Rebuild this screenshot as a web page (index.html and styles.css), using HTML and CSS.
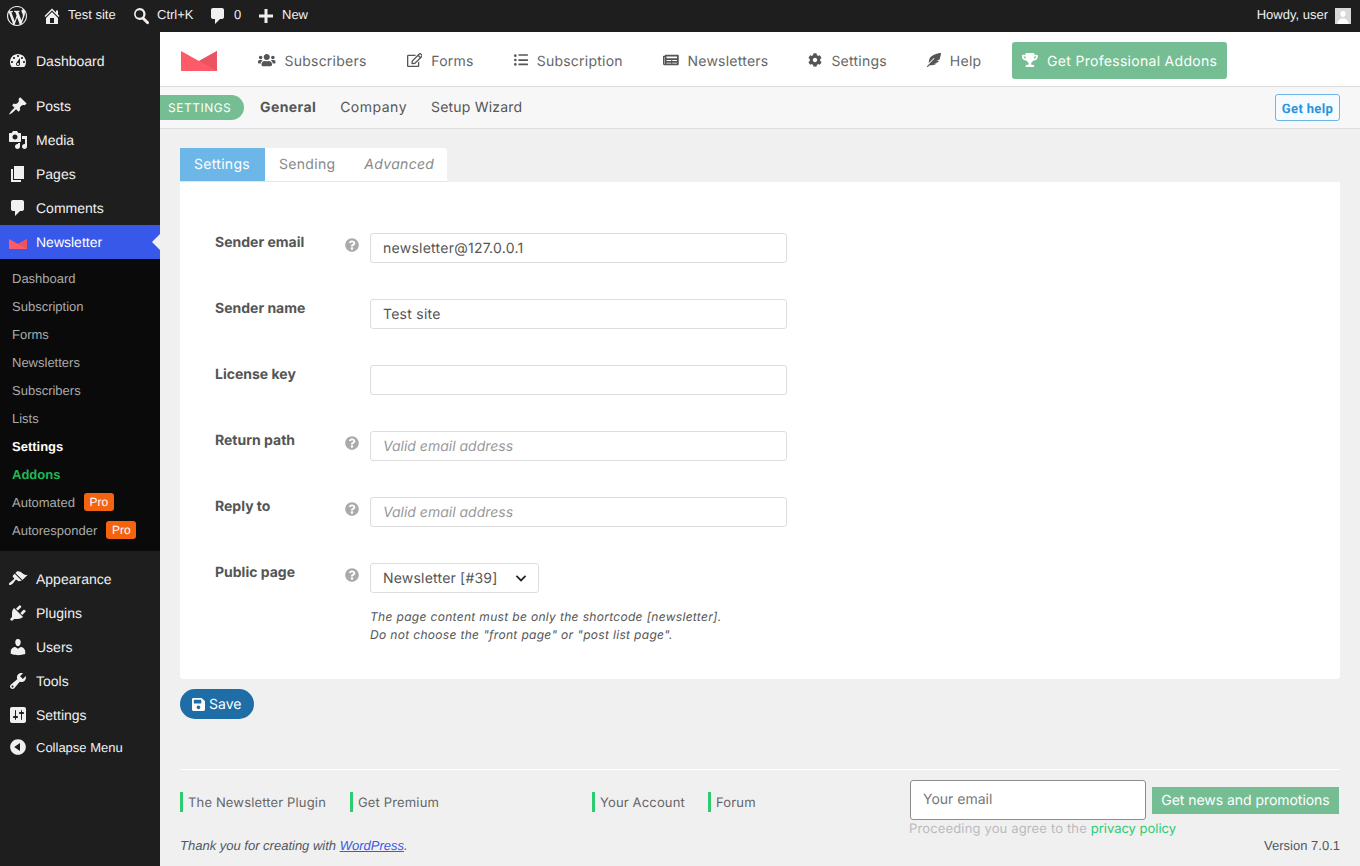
FILE: index.html
```html
<!DOCTYPE html>
<html lang="en">
<head>
<meta charset="utf-8">
<title>Settings</title>
<link rel="stylesheet" href="styles.css">
</head>
<body>
<svg class="defs" width="0" height="0" aria-hidden="true">
<symbol id="logo" viewBox="0 0 36 20"><path fill="#ff5a68" d="M0 0l18 10L36 0v20H0z"/><path fill="#ea5463" d="M18 10L36 0v20z"/></symbol>
<symbol id="fa-q" viewBox="0 0 512 512"><path d="M504 256c0 136.997-111.043 248-248 248S8 392.997 8 256C8 119.083 119.043 8 256 8s248 111.083 248 248zM262.655 90c-54.497 0-89.255 22.957-116.549 63.758-3.536 5.286-2.353 12.415 2.715 16.258l34.699 26.31c5.205 3.947 12.621 3.008 16.665-2.122 17.864-22.658 30.113-35.797 57.303-35.797 20.429 0 45.698 13.148 45.698 32.958 0 14.976-12.363 22.667-32.534 33.976C247.128 238.528 216 254.941 216 296v4c0 6.627 5.373 12 12 12h56c6.627 0 12-5.373 12-12v-1.333c0-28.462 83.186-29.647 83.186-106.667 0-58.002-60.165-102-116.531-102zM256 338c-25.365 0-46 20.635-46 46 0 25.364 20.635 46 46 46s46-20.636 46-46c0-25.365-20.635-46-46-46z"/></symbol>
</svg>

<header class="adminbar">
  <div class="ab-left">
    <a class="ab-item ab-wp"><svg class="ab-ico-wp" viewBox="0 0 20 20"><path d="M20 10c0-5.51-4.49-10-10-10C4.48 0 0 4.49 0 10c0 5.52 4.48 10 10 10 5.51 0 10-4.48 10-10zM7.78 15.37L4.37 6.22c.55-.02 1.17-.08 1.17-.08.5-.06.44-1.13-.06-1.11 0 0-1.45.11-2.37.11-.18 0-.37 0-.58-.01C4.12 2.69 6.87 1.11 10 1.11c2.33 0 4.45.87 6.05 2.34-.68-.11-1.65.39-1.65 1.58 0 .74.45 1.36.9 2.1.35.61.55 1.36.55 2.46 0 1.49-1.4 5-1.4 5l-3.03-8.37c.54-.02.82-.17.82-.17.5-.05.44-1.25-.06-1.22 0 0-1.44.12-2.38.12-.87 0-2.33-.12-2.33-.12-.5-.03-.56 1.2-.06 1.22l.92.08 1.26 3.41zM17.41 10c.24-.64.74-1.87.43-4.25.7 1.29 1.05 2.71 1.05 4.25 0 3.29-1.73 6.24-4.4 7.78.97-2.59 1.94-5.2 2.92-7.78zM6.1 18.09C3.12 16.65 1.11 13.53 1.11 10c0-1.3.23-2.48.72-3.59C3.25 10.3 4.67 14.2 6.1 18.09zm4.03-6.63l2.58 6.98c-.86.29-1.76.45-2.71.45-.79 0-1.57-.11-2.29-.33.81-2.38 1.62-4.74 2.42-7.1z"/></svg></a>
    <a class="ab-item"><svg class="ab-ico" viewBox="0 0 20 20"><path d="M16 8.5l1.53 1.53-1.06 1.06L10 4.62l-6.47 6.47-1.06-1.06L10 2.5l4 4v-2h2v4zm-6-2.46l6 5.99V18H4v-5.97zM12 17v-5H8v5h4z"/></svg><span>Test site</span></a>
    <a class="ab-item ab-search"><svg class="ab-ico" viewBox="0 0 20 20"><path d="M8.5 2a6 6 0 0 1 4.9 9.45l4.3 4.3a1.5 1.5 0 0 1-2.1 2.1l-4.3-4.3A6 6 0 1 1 8.5 2zm0 2.2a3.8 3.8 0 1 0 0 7.6 3.8 3.8 0 0 0 0-7.6z"/></svg><span>Ctrl+K</span></a>
    <a class="ab-item"><svg class="ab-ico" viewBox="0 0 20 20"><path d="M5 2h9c1.1 0 2 .9 2 2v7c0 1.1-.9 2-2 2h-2l-5 5v-5H5c-1.1 0-2-.9-2-2V4c0-1.1.9-2 2-2z"/></svg><span>0</span></a>
    <a class="ab-item"><svg class="ab-ico" viewBox="0 0 20 20"><path d="M17 8.5v3h-5.5V17h-3v-5.500H3v-3h5.500V3h3v5.500z"/></svg><span>New</span></a>
  </div>
  <div class="ab-right">
    <span>Howdy, user</span>
    <span class="avatar"><svg viewBox="0 0 16 16"><path d="M8 3a2.600 2.600 0 0 1 2.600 2.800c0 1.700-1.100 3.200-2.600 3.200S5.400 7.500 5.400 5.800A2.600 2.600 0 0 1 8 3zM2.500 16c0-3.500 2.500-5.500 5.500-5.500s5.500 2 5.500 5.500z"/></svg></span>
  </div>
</header>

<div class="shell">
<nav class="sidebar">
  <ul class="menu menu-first">
    <li class="mi"><svg viewBox="0 0 20 20"><path d="M3.760 16h12.480c1.100-1.370 1.760-3.110 1.760-5 0-4.420-3.580-8-8-8s-8 3.580-8 8c0 1.890.66 3.630 1.760 5zM10 4c.55 0 1 .45 1 1s-.45 1-1 1-1-.45-1-1 .45-1 1-1zM6 6c.55 0 1 .45 1 1s-.45 1-1 1-1-.45-1-1 .45-1 1-1zm8 0c.55 0 1 .45 1 1s-.45 1-1 1-1-.45-1-1 .45-1 1-1zm-5.370 5.550L12 7v6c0 1.100-.9 2-2 2s-2-.9-2-2c0-.57.24-1.080.63-1.450zM4 10c.55 0 1 .45 1 1s-.45 1-1 1-1-.45-1-1 .45-1 1-1zm12 0c.55 0 1 .45 1 1s-.45 1-1 1-1-.45-1-1 .45-1 1-1zm-5 3c0-.55-.45-1-1-1s-1 .45-1 1 .45 1 1 1 1-.45 1-1z"/></svg><span>Dashboard</span></li>
  </ul>
  <ul class="menu menu-second">
    <li class="mi"><svg viewBox="0 0 20 20"><path d="M10.440 3.020l1.820-1.820 6.360 6.350-1.830 1.820c-1.050-.68-2.480-.57-3.410.36l-.75.75c-.92.93-1.040 2.350-.35 3.410l-1.830 1.820-2.410-2.410-2.800 2.790c-.42.42-3.380 2.710-3.800 2.290s1.860-3.390 2.280-3.810l2.790-2.790L4.100 9.360l1.830-1.820c1.050.69 2.480.57 3.400-.36l.75-.75c.93-.92 1.050-2.350.36-3.410z"/></svg><span>Posts</span></li>
    <li class="mi"><svg viewBox="0 0 20 20"><path d="M13 11V4c0-.55-.45-1-1-1h-1.670L9 1H5L3.670 3H2c-.55 0-1 .45-1 1v7c0 .55.45 1 1 1h10c.55 0 1-.45 1-1zM7 4.500c1.380 0 2.500 1.120 2.500 2.500S8.380 9.500 7 9.500 4.500 8.380 4.500 7 5.620 4.500 7 4.500zM14 6h5v10.500c0 1.380-1.120 2.500-2.500 2.500S14 17.880 14 16.500s1.120-2.500 2.500-2.500c.17 0 .34.02.5.05V9h-3V6zm-4 8.050V13h2v3.500c0 1.380-1.120 2.500-2.500 2.500S7 17.880 7 16.500 8.120 14 9.500 14c.17 0 .34.02.5.05z"/></svg><span>Media</span></li>
    <li class="mi"><svg viewBox="0 0 20 20"><path d="M6 15V2h10v13H6zm-1 1h8v2H3V5h2v11z"/></svg><span>Pages</span></li>
    <li class="mi"><svg viewBox="0 0 20 20"><path d="M5 2h9c1.100 0 2 .9 2 2v7c0 1.100-.9 2-2 2h-2l-5 5v-5H5c-1.100 0-2-.9-2-2V4c0-1.100.9-2 2-2z"/></svg><span>Comments</span></li>
    <li class="mi mi-active"><svg class="mi-logo"><use href="#logo"/></svg><span>Newsletter</span></li>
  </ul>
  <ul class="submenu">
    <li>Dashboard</li>
    <li>Subscription</li>
    <li>Forms</li>
    <li>Newsletters</li>
    <li>Subscribers</li>
    <li>Lists</li>
    <li class="sub-current">Settings</li>
    <li class="sub-addons">Addons</li>
    <li>Automated <b class="pro">Pro</b></li>
    <li>Autoresponder <b class="pro">Pro</b></li>
  </ul>
  <ul class="menu menu-third">
    <li class="mi"><svg viewBox="0 0 20 20"><path d="M14.480 11.060L7.410 3.990l1.500-1.500c.5-.56 2.300-.47 3.510.32 1.210.8 1.430 1.280 2.910 2.100 1.180.64 2.450 1.260 4.450.85zm-.71.71L6.700 4.700 4.930 6.470c-.39.39-.39 1.020 0 1.410l1.060 1.060c.39.39.39 1.030 0 1.420-.6.6-1.430 1.110-2.210 1.690-.35.26-.7.53-1.010.84C1.430 13.230.4 14.960 1.190 15.750c.79.79 2.520-.24 3.860-1.580.31-.31.58-.66.84-1.010.58-.78 1.090-1.610 1.690-2.210.39-.39 1.030-.39 1.420 0l1.060 1.060c.39.39 1.020.39 1.410 0z"/></svg><span>Appearance</span></li>
    <li class="mi"><svg viewBox="0 0 20 20"><path d="M13.110 4.360L9.870 7.600 8 5.730l3.240-3.240c.35-.34 1.050-.2 1.560.32.52.51.66 1.210.31 1.550zm-8 1.770l.91-1.120 9.010 9.010-1.190.84c-.71.71-2.630 1.160-3.820 1.160H6.140L4.900 17.260c-.59.59-1.540.59-2.120 0-.59-.58-.59-1.530 0-2.120l1.240-1.240v-3.880c0-1.130.4-3.190 1.090-3.890zm7.260 3.970l3.240-3.240c.34-.35 1.040-.21 1.550.31.52.51.66 1.210.31 1.550l-3.240 3.250z"/></svg><span>Plugins</span></li>
    <li class="mi"><svg viewBox="0 0 20 20"><path d="M10 9.250c-2.270 0-2.730-3.440-2.730-3.440C7 4.020 7.820 2 9.970 2c2.160 0 2.980 2.020 2.710 3.810 0 0-.41 3.440-2.680 3.440zm0 2.570L12.720 10c2.390 0 4.520 2.330 4.520 4.530v2.490s-3.650 1.130-7.240 1.130c-3.650 0-7.240-1.130-7.240-1.130v-2.490c0-2.250 1.940-4.480 4.470-4.480z"/></svg><span>Users</span></li>
    <li class="mi"><svg viewBox="0 0 20 20"><path d="M16.680 9.770c-1.340 1.340-3.300 1.670-4.950.99l-5.410 6.520c-.99.99-2.590.99-3.580 0s-.99-2.590 0-3.570l6.520-5.420c-.68-1.650-.35-3.610.99-4.950 1.280-1.280 3.120-1.620 4.720-1.060l-2.890 2.890 2.820 2.820 2.860-2.870c.53 1.580.18 3.390-1.080 4.650zM3.810 16.210c.4.39 1.040.39 1.430 0 .4-.4.4-1.040 0-1.430-.39-.4-1.030-.4-1.430 0-.39.39-.39 1.030 0 1.430z"/></svg><span>Tools</span></li>
    <li class="mi"><svg viewBox="0 0 20 20"><path d="M18 16V4c0-1.100-.9-2-2-2H4c-1.100 0-2 .9-2 2v12c0 1.100.9 2 2 2h12c1.100 0 2-.9 2-2zM8 11h1c.55 0 1 .45 1 1s-.45 1-1 1H8v1.500c0 .28-.22.5-.5.5s-.5-.22-.5-.5V13H6c-.55 0-1-.45-1-1s.45-1 1-1h1V5.500c0-.28.22-.5.5-.5s.5.22.5.5V11zm5-2h-1c-.55 0-1-.45-1-1s.45-1 1-1h1V5.500c0-.28.22-.5.5-.5s.5.22.5.5V7h1c.55 0 1 .45 1 1s-.45 1-1 1h-1v5.500c0 .28-.22.5-.5.5s-.5-.22-.5-.5V9z"/></svg><span>Settings</span></li>
    <li class="mi mi-collapse"><svg viewBox="0 0 20 20"><path d="M10 2.160c4.330 0 7.840 3.510 7.840 7.840s-3.510 7.840-7.840 7.840S2.160 14.330 2.160 10 5.710 2.160 10 2.160zm2 11.720V6.120L6.180 9.970z"/></svg><span>Collapse Menu</span></li>
  </ul>
</nav>

<main class="main">
  <div class="topnav">
    <svg class="tn-logo"><use href="#logo"/></svg>
    <a class="tn-item"><svg class="tn-ico tn-w640" viewBox="0 0 640 512"><path d="M96 224c35.300 0 64-28.700 64-64s-28.700-64-64-64-64 28.700-64 64 28.700 64 64 64zm448 0c35.300 0 64-28.700 64-64s-28.700-64-64-64-64 28.700-64 64 28.700 64 64 64zm32 32h-64c-17.600 0-33.500 7.100-45.100 18.600 40.300 22.100 68.900 62 75.100 109.400h66c17.700 0 32-14.300 32-32v-32c0-35.300-28.700-64-64-64zm-256 0c61.900 0 112-50.100 112-112S381.900 32 320 32 208 82.100 208 144s50.100 112 112 112zm76.800 32h-8.300c-20.800 10-43.900 16-68.500 16s-47.600-6-68.500-16h-8.300C179.600 288 128 339.600 128 403.200V432c0 26.500 21.500 48 48 48h288c26.500 0 48-21.500 48-48v-28.800c0-63.600-51.600-115.200-115.200-115.200zm-223.700-13.400C161.500 263.100 145.600 256 128 256H64c-35.300 0-64 28.700-64 64v32c0 17.700 14.300 32 32 32h65.900c6.300-47.400 34.900-87.300 75.200-109.400z"/></svg>Subscribers</a>
    <a class="tn-item"><svg class="tn-ico tn-w576" viewBox="0 0 576 512"><path d="M402.300 344.900l32-32c5-5 13.700-1.500 13.700 5.700V464c0 26.500-21.500 48-48 48H48c-26.500 0-48-21.500-48-48V112c0-26.500 21.500-48 48-48h273.500c7.100 0 10.700 8.600 5.700 13.700l-32 32c-1.500 1.500-3.500 2.300-5.700 2.300H48v352h352V350.500c0-2.100.8-4.100 2.300-5.600zm156.600-201.800L296.300 405.700l-90.400 10c-26.200 2.900-48.500-19.200-45.600-45.600l10-90.400L432.900 17.100c22.900-22.900 59.900-22.900 82.700 0l43.200 43.200c22.900 22.900 22.900 60 .1 82.800zM460.100 174L402 115.900 216.200 301.800l-7.300 65.300 65.300-7.300L460.100 174zm64.800-79.700l-43.200-43.200c-4.100-4.100-10.800-4.100-14.800 0L436 82l58.100 58.100 30.900-30.900c4-4.200 4-10.800-.1-14.900z"/></svg>Forms</a>
    <a class="tn-item"><svg class="tn-ico tn-w512" viewBox="0 0 512 512"><path d="M48 48a48 48 0 1 0 0 96 48 48 0 0 0 0-96zm0 160a48 48 0 1 0 0 96 48 48 0 0 0 0-96zm0 160a48 48 0 1 0 0 96 48 48 0 0 0 0-96zm128-272h320a16 16 0 0 0 16-16V64a16 16 0 0 0-16-16H176a16 16 0 0 0-16 16v16a16 16 0 0 0 16 16zm320 128H176a16 16 0 0 0-16 16v32a16 16 0 0 0 16 16h320a16 16 0 0 0 16-16v-32a16 16 0 0 0-16-16zm0 160H176a16 16 0 0 0-16 16v32a16 16 0 0 0 16 16h320a16 16 0 0 0 16-16v-32a16 16 0 0 0-16-16z"/></svg>Subscription</a>
    <a class="tn-item"><svg class="tn-ico tn-w576" viewBox="0 0 576 512"><path d="M552 64H88c-13.255 0-24 10.745-24 24v8H24c-13.255 0-24 10.745-24 24v272c0 30.928 25.072 56 56 56h472c26.510 0 48-21.490 48-48V88c0-13.255-10.745-24-24-24zM56 400a8 8 0 0 1-8-8V144h16v248a8 8 0 0 1-8 8zm236-16H140c-6.627 0-12-5.373-12-12v-8c0-6.627 5.373-12 12-12h152c6.627 0 12 5.373 12 12v8c0 6.627-5.373 12-12 12zm208 0H348c-6.627 0-12-5.373-12-12v-8c0-6.627 5.373-12 12-12h152c6.627 0 12 5.373 12 12v8c0 6.627-5.373 12-12 12zm-208-96H140c-6.627 0-12-5.373-12-12v-8c0-6.627 5.373-12 12-12h152c6.627 0 12 5.373 12 12v8c0 6.627-5.373 12-12 12zm208 0H348c-6.627 0-12-5.373-12-12v-8c0-6.627 5.373-12 12-12h152c6.627 0 12 5.373 12 12v8c0 6.627-5.373 12-12 12zm0-96H140c-6.627 0-12-5.373-12-12v-40c0-6.627 5.373-12 12-12h360c6.627 0 12 5.373 12 12v40c0 6.627-5.373 12-12 12z"/></svg>Newsletters</a>
    <a class="tn-item"><svg class="tn-ico tn-w512" viewBox="0 0 512 512"><path d="M487.400 315.700l-42.600-24.600c4.300-23.200 4.300-47 0-70.200l42.600-24.600c4.900-2.800 7.100-8.600 5.500-14-11.100-35.600-30-67.800-54.700-94.600-3.800-4.100-10-5.100-14.800-2.300L380.800 110c-17.900-15.400-38.500-27.300-60.800-35.100V25.800c0-5.600-3.900-10.500-9.400-11.700-36.700-8.200-74.300-7.800-109.200 0-5.500 1.200-9.400 6.100-9.400 11.700V75c-22.200 7.900-42.800 19.800-60.800 35.100L88.700 85.500c-4.900-2.800-11-1.900-14.800 2.300-24.700 26.700-43.600 58.900-54.700 94.600-1.700 5.400.6 11.200 5.500 14L67.300 221c-4.300 23.200-4.300 47 0 70.200l-42.600 24.600c-4.900 2.800-7.100 8.600-5.500 14 11.100 35.600 30 67.800 54.700 94.600 3.800 4.100 10 5.100 14.800 2.300l42.600-24.600c17.900 15.400 38.500 27.300 60.800 35.100v49.200c0 5.600 3.900 10.500 9.400 11.700 36.700 8.200 74.300 7.800 109.200 0 5.500-1.200 9.400-6.100 9.400-11.700v-49.200c22.200-7.900 42.800-19.800 60.800-35.100l42.600 24.600c4.900 2.800 11 1.900 14.800-2.300 24.700-26.700 43.600-58.900 54.700-94.600 1.500-5.500-.7-11.300-5.600-14.100zM256 336c-44.100 0-80-35.900-80-80s35.900-80 80-80 80 35.900 80 80-35.900 80-80 80z"/></svg>Settings</a>
    <a class="tn-item"><svg class="tn-ico tn-w512" viewBox="0 0 512 512"><path d="M512 0C460.220 3.560 96.440 38.200 71.010 287.610c-3.090 26.660-4.840 53.440-5.990 80.240l178.870-178.690c6.250-6.250 16.400-6.250 22.650 0s6.250 16.380 0 22.630L7.040 471.030c-9.380 9.370-9.380 24.570 0 33.940 9.370 9.370 24.570 9.370 33.940 0l57.130-57.070c42.090-.14 84.150-2.530 125.960-7.360 53.480-5.440 97.020-26.470 132.580-56.540H255.740l146.790-48.880c11.250-14.890 21.370-30.710 30.450-47.120h-81.140l106.540-53.210C500.290 132.860 510.190 26.260 512 0z"/></svg>Help</a>
    <a class="tn-pro"><svg class="tn-ico tn-w576" viewBox="0 0 576 512"><path d="M552 64H448V24c0-13.300-10.700-24-24-24H152c-13.300 0-24 10.700-24 24v40H24C10.700 64 0 74.700 0 88v56c0 35.700 22.500 72.400 61.900 100.700 31.500 22.700 69.800 37.100 110 41.700C203.300 338.500 240 360 240 360v72h-48c-35.300 0-64 20.700-64 56v12c0 6.600 5.400 12 12 12h296c6.600 0 12-5.400 12-12v-12c0-35.300-28.700-56-64-56h-48v-72s36.700-21.500 68.100-73.600c40.300-4.600 78.700-19 110-41.700 39.300-28.300 61.900-65 61.900-100.700V88c0-13.300-10.700-24-24-24zM99.300 192.800C74.900 175.200 64 155.600 64 144v-16h64.200c1 32.600 5.800 61.200 12.800 86.200-15.100-5.200-29.200-12.400-41.700-21.400zM512 144c0 16.100-17.700 36.100-35.300 48.800-12.500 9-26.700 16.200-41.800 21.400 7-25 11.800-53.600 12.800-86.200H512v16z"/></svg>Get Professional Addons</a>
  </div>

  <div class="subnav">
    <span class="pill">SETTINGS</span>
    <a class="sn-link sn-current">General</a>
    <a class="sn-link sn-company">Company</a>
    <a class="sn-link">Setup Wizard</a>
    <a class="gethelp">Get help</a>
  </div>

  <div class="content">
    <div class="tabs">
      <a class="tab tab-active">Settings</a>
      <a class="tab tab-send">Sending</a>
      <a class="tab tab-adv">Advanced</a>
    </div>
    <form class="panel">
      <div class="row">
        <label class="lab">Sender email</label>
        <span class="hint"><svg><use href="#fa-q"/></svg></span>
        <input class="field" type="text" value="newsletter@127.0.0.1">
      </div>
      <div class="row">
        <label class="lab">Sender name</label>
        <span class="hint"></span>
        <input class="field" type="text" value="Test site">
      </div>
      <div class="row">
        <label class="lab">License key</label>
        <span class="hint"></span>
        <input class="field" type="text">
      </div>
      <div class="row">
        <label class="lab">Return path</label>
        <span class="hint"><svg><use href="#fa-q"/></svg></span>
        <input class="field" type="text" placeholder="Valid email address">
      </div>
      <div class="row">
        <label class="lab">Reply to</label>
        <span class="hint"><svg><use href="#fa-q"/></svg></span>
        <input class="field" type="text" placeholder="Valid email address">
      </div>
      <div class="row row-last">
        <label class="lab">Public page</label>
        <span class="hint"><svg><use href="#fa-q"/></svg></span>
        <div class="pick">
          <div class="select"><span>Newsletter [#39]</span><svg viewBox="0 0 20 20"><path d="M3.500 7l6.500 6.500L16.500 7"/></svg></div>
          <p class="desc">The page content must be only the shortcode [newsletter].<br>Do not choose the "front page" or "post list page".</p>
        </div>
      </div>
    </form>
    <button class="save" type="button"><svg viewBox="0 0 448 512"><path d="M433.941 129.941l-83.882-83.882A48 48 0 0 0 316.118 32H48C21.490 32 0 53.490 0 80v352c0 26.510 21.490 48 48 48h352c26.510 0 48-21.490 48-48V163.882a48 48 0 0 0-14.059-33.941zM224 416c-35.346 0-64-28.654-64-64 0-35.346 28.654-64 64-64s64 28.654 64 64c0 35.346-28.654 64-64 64zm96-304.520V212c0 6.627-5.373 12-12 12H76c-6.627 0-12-5.373-12-12V108c0-6.627 5.373-12 12-12h228.520c3.183 0 6.235 1.264 8.485 3.515l3.480 3.480A11.996 11.996 0 0 1 320 111.480z"/></svg>Save</button>

    <footer class="foot">
      <div class="foot-links">
        <a class="fl">The Newsletter Plugin</a>
        <a class="fl">Get Premium</a>
        <a class="fl">Your Account</a>
        <a class="fl">Forum</a>
      </div>
      <div class="foot-sub">
        <div class="foot-form">
          <input class="foot-input" type="text" placeholder="Your email">
          <a class="foot-btn">Get news and promotions</a>
        </div>
        <p class="foot-note">Proceeding you agree to the <a>privacy policy</a></p>
      </div>
    </footer>
    <div class="wpfoot">
      <em>Thank you for creating with <a>WordPress</a>.</em>
      <span>Version 7.0.1</span>
    </div>
  </div>
</main>
</div>
</body>
</html>
```
FILE: styles.css
```css
* { box-sizing: border-box; }
html, body { margin: 0; padding: 0; height: 866px; overflow: hidden; }
body { background: #f0f0f1; font-family: "Liberation Sans", Arial, sans-serif; font-size: 13px; color: #3c434a; text-rendering: geometricPrecision; }
ul { list-style: none; margin: 0; padding: 0; }
p { margin: 0; }
.defs { position: absolute; }
input { text-rendering: geometricPrecision; }

.adminbar { height: 32px; background: #1e1e1e; color: #f0f0f1; display: flex; justify-content: space-between; align-items: center; font-size: 13px; }
.ab-left { display: flex; align-items: center; height: 100%; padding-left: 7px; }
.ab-item { display: flex; align-items: center; height: 100%; }
.ab-item span { margin-top: -3px; }
.ab-item svg { fill: #f0f0f1; }
.ab-wp { width: 35px; }
.ab-ico-wp { width: 20px; height: 20px; }
.ab-ico { width: 20px; height: 20px; margin-right: 6px; }
.ab-item:nth-child(2) { width: 89px; }
.ab-item:nth-child(3) { width: 77px; }
.ab-item:nth-child(4) { width: 48px; }
.ab-right { display: flex; align-items: center; gap: 7px; padding-right: 9px; }
.ab-right > span:first-child { margin-top: -3px; }
.avatar { width: 16px; height: 16px; background: #d8d8d8; display: block; }
.avatar svg { display: block; width: 16px; height: 16px; fill: #fff; }

.shell { display: flex; height: 834px; }
.sidebar { width: 160px; flex: none; background: #1e1e1e; color: #f0f0f1; font-size: 14px; }
.menu-first { padding-top: 12px; }
.menu-second { padding-top: 11px; }
.menu-third { padding-top: 11px; }
.mi { height: 34px; display: flex; align-items: center; position: relative; padding-left: 8px; }
.mi svg { width: 20px; height: 20px; fill: #f0f0f1; margin-right: 8px; flex: none; }
.mi-active { background: #3858e9; color: #fff; }
.mi-active::after { content: ""; position: absolute; right: 0; top: 50%; margin-top: -8px; border: 8px solid transparent; border-right-color: #f0f0f1; border-left-width: 0; }
.mi .mi-logo { width: 18px; height: 10px; margin: 3px 9px 0 1px; }
.mi-collapse { font-size: 13px; height: 32px; margin-top: -1px; }
.submenu { background: #0a0a0a; padding: 5px 0 7px; font-size: 13px; color: #aaa; }
.submenu li { height: 28px; display: flex; align-items: center; padding-left: 12px; }
.sub-current { color: #fff; font-weight: 700; }
.sub-addons { color: #1db954; font-weight: 700; }
.pro { background: #f4640f; color: #fff; font-weight: 400; font-size: 12px; border-radius: 3px; width: 30px; height: 18px; line-height: 18px; text-align: center; margin-left: 9px; }

.main { flex: 1; min-width: 0; display: flex; flex-direction: column; font-family: Inter, "Liberation Sans", sans-serif; }
.topnav { height: 55px; background: #fff; border-bottom: 1px solid #ddd; display: flex; align-items: center; padding: 2px 0 0 21px; font-size: 14px; color: #666; }
.tn-logo { width: 36px; height: 20px; margin: 1px 21px 0 0; flex: none; }
.tn-item { display: flex; align-items: center; padding: 2px 20px 0; color: #666; letter-spacing: .23px; }
.tn-ico { height: 14px; fill: #555; margin: -2px 9px 0 0; flex: none; }
.tn-w640 { width: 17.5px; }
.tn-w576 { width: 15.750px; }
.tn-w512 { width: 14px; }
.tn-pro { margin: 1px 0 0 11px; height: 37px; width: 215px; background: #75bd92; color: #fff; border-radius: 3px; display: flex; align-items: center; padding: 1px 0 0 10px; letter-spacing: .3px; }
.tn-pro .tn-ico { fill: #fff; }

.subnav { height: 42px; background: #f7f7f7; border-bottom: 1px solid #ddd; display: flex; align-items: center; padding-right: 20px; font-size: 14px; color: #555; }
.pill { background: #75bd92; color: #fff; font-size: 12px; height: 25px; line-height: 25px; width: 84px; padding-left: 8px; border-radius: 0 13px 13px 0; letter-spacing: .5px; margin-right: 16px; font-weight: 400; }
.sn-link { margin: 0 24px 0 0; letter-spacing: .2px; }
.sn-current { font-weight: 700; letter-spacing: .4px; }
.sn-company { letter-spacing: .5px; }
.gethelp { margin-left: auto; margin-right: 0; width: 65px; height: 27px; border: 1px solid #6db6e8; border-radius: 3px; background: #f5fbff; color: #2a93dc; font-family: Roboto, sans-serif; font-weight: 700; font-size: 13px; letter-spacing: .35px; display: flex; align-items: center; justify-content: center; padding-top: 3px; }

.content { flex: 1; padding: 19px 20px 0; }
.tabs { display: flex; width: max-content; background: #fff; border-radius: 3px 3px 0 0; height: 34px; border-bottom: 1px solid #e5e5e5; font-size: 14px; color: #888; letter-spacing: .3px; }
.tab { height: 33px; padding: 0 14px; display: flex; align-items: center; }
.tab-active { background: #6db6e8; color: #fff; padding-right: 15px; }
.tab-send { padding-right: 15px; }
.tab-adv { font-style: italic; padding-right: 13px; }
.panel { background: #fff; border-radius: 0 0 3px 3px; height: 497px; padding: 51px 35px 0; }
.row { display: flex; align-items: flex-start; height: 66px; }
.lab { width: 130px; font-weight: 700; color: #555; font-size: 14px; line-height: 18px; flex: none; padding-top: 1px; }
.hint { width: 25px; flex: none; height: 16px; margin-top: 5px; }
.hint svg { display: block; width: 14px; height: 14px; fill: #aaa; }
.field { width: 417px; height: 30px; border: 1px solid #ddd; border-radius: 3px; padding: 0 12px; font-family: inherit; font-size: 14px; color: #555; background: #fff; outline: none; margin: 0; letter-spacing: .25px; }
.field::placeholder { color: #999; font-style: italic; opacity: 1; letter-spacing: 0; }
.select { width: 169px; height: 30px; border: 1px solid #ddd; border-radius: 3px; display: flex; align-items: center; justify-content: space-between; padding: 0 10px 0 12px; font-size: 14px; color: #555; background: #fff; letter-spacing: .2px; }
.select svg { width: 14px; height: 14px; fill: none; stroke: #222; stroke-width: 2.400; }
.desc { font-size: 12px; font-style: italic; line-height: 18px; color: #555; margin-top: 15px; letter-spacing: .3px; word-spacing: .15px; }

.save { display: flex; align-items: center; margin: 10px 0 0; height: 30px; width: 74px; padding: 0 0 0 12px; border: 0; border-radius: 15px; background: #1e6da6; color: #fff; font-family: inherit; font-size: 14px; text-rendering: geometricPrecision; }
.save svg { width: 13px; height: 15px; fill: #fff; margin: 0 4px 0 0; }

.foot { margin-top: 50px; border-top: 1px solid #fff; display: flex; height: 68px; position: relative; }
.foot-links { width: 730px; display: grid; grid-template-columns: 170px 242px 116px auto; padding-top: 22px; align-self: flex-start; font-size: 13px; color: #666; letter-spacing: .15px; }
.fl { border-left: 3px solid #2ecc71; padding: 1px 0 0 5px; height: 20px; line-height: 20px; }
.foot-sub { padding-top: 10px; flex: 1; }
.foot-form { display: flex; align-items: center; gap: 6px; }
.foot-input { width: 236px; height: 40px; border: 1px solid #8c8c8c; border-radius: 3px; padding: 0 12px 2px; background: #fff; font-family: inherit; font-size: 14px; outline: none; margin: 0; }
.foot-input::placeholder { color: #777; opacity: 1; }
.foot-btn { width: 187px; height: 27px; background: #75bd92; color: #fff; font-size: 14px; display: flex; align-items: center; justify-content: center; letter-spacing: -.05px; }
.foot-note { font-size: 13px; color: #bbb; letter-spacing: .15px; line-height: 16px; margin: 1px 0 0 -1px; }
.foot-note a { color: #2ecc71; letter-spacing: 0; }
.wpfoot { display: flex; justify-content: space-between; align-items: center; font-family: "Liberation Sans", Arial, sans-serif; font-size: 13px; color: #50575e; height: 18px; margin-top: -1px; }
.wpfoot a { color: #3858e9; text-decoration: underline; }
```
